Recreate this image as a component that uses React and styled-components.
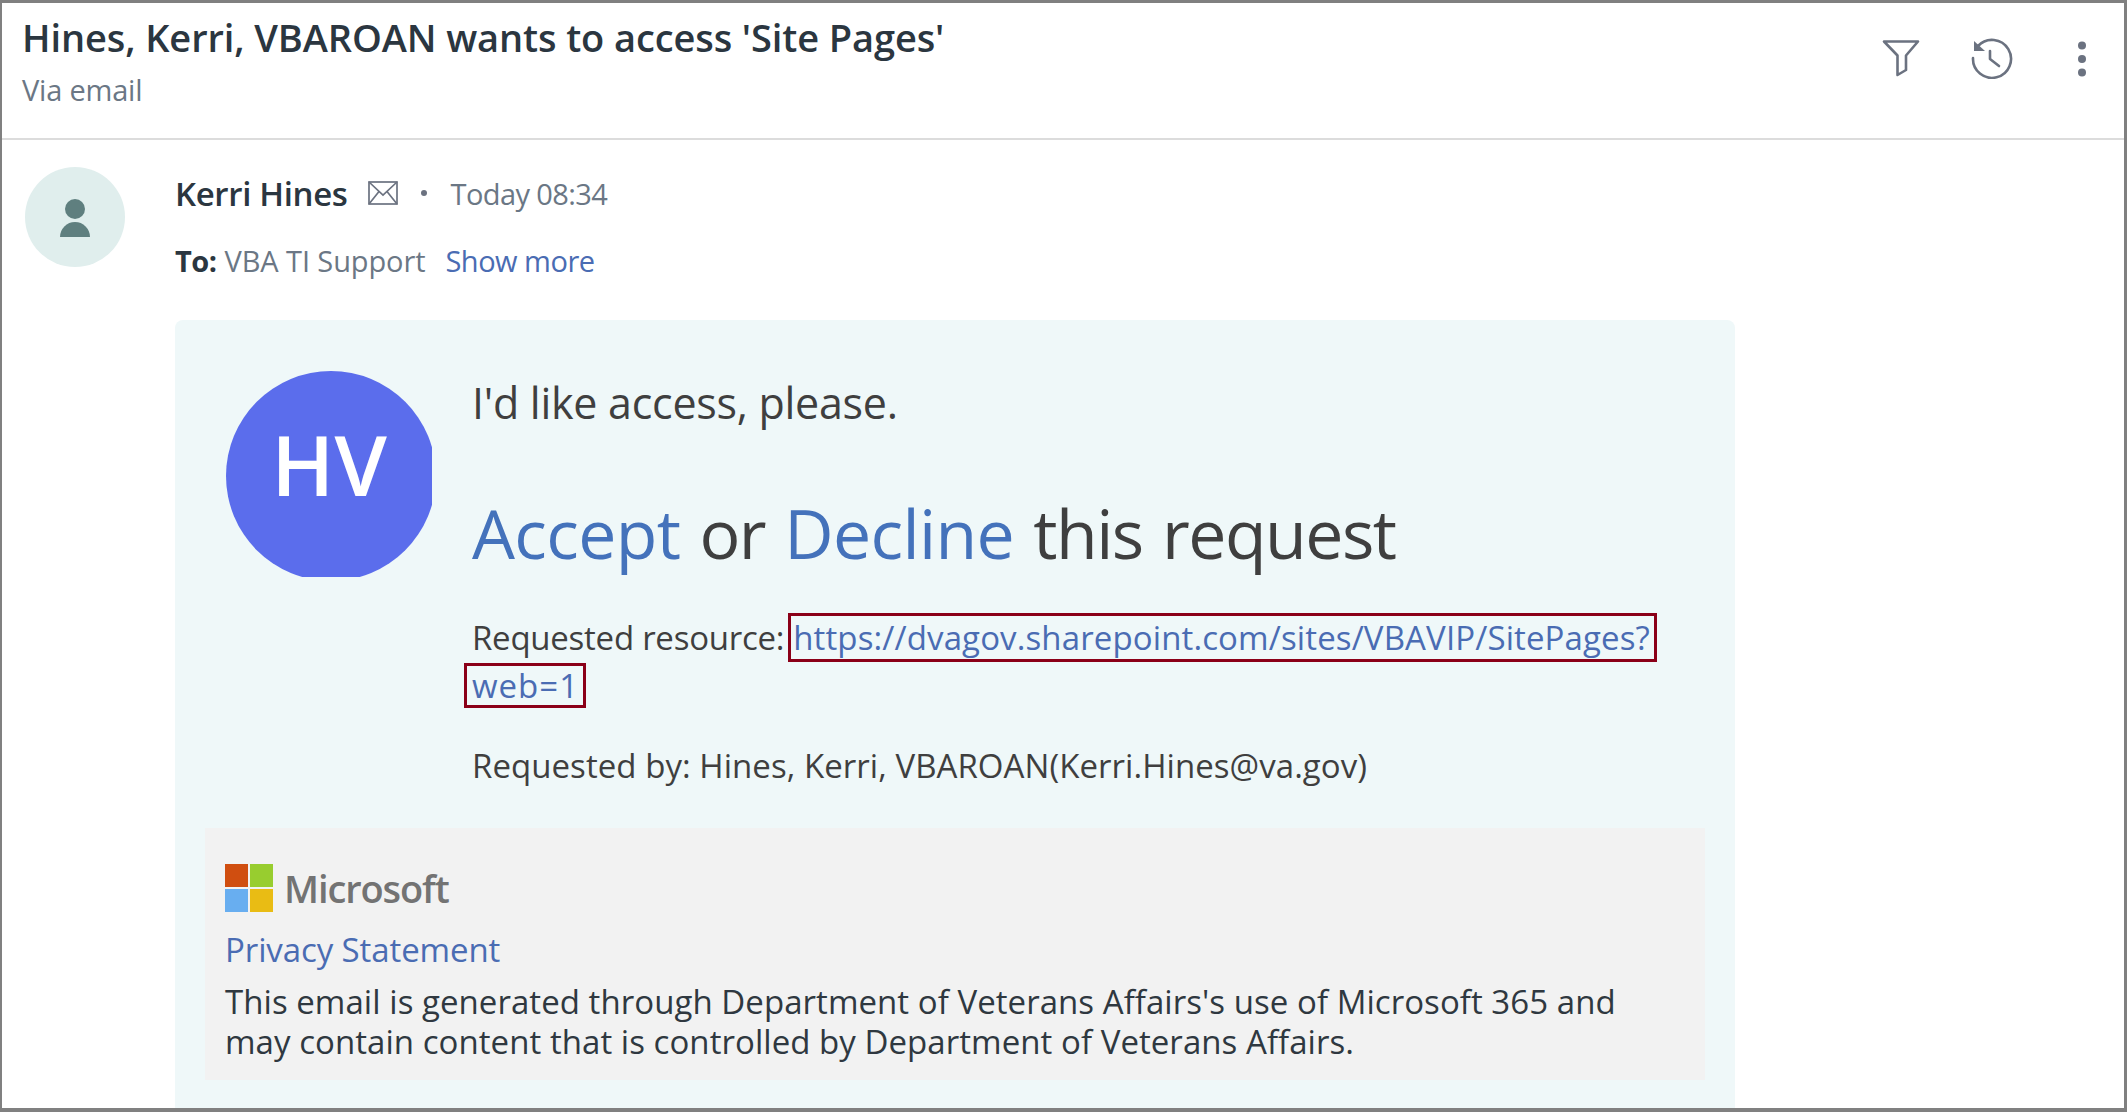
import React from 'react'
import styled, { createGlobalStyle } from 'styled-components'

const Global = createGlobalStyle`
  html, body { margin: 0; padding: 0; background: #fff; }
  body { font-family: "Open Sans", "Noto Sans", "Liberation Sans", sans-serif; }
`

const Frame = styled.div`
  box-sizing: border-box;
  width: 2127px;
  height: 1112px;
  overflow: hidden;
  background: #fff;
  border-style: solid;
  border-color: #808080;
  border-width: 3px 3px 4px 2px;
`

const Header = styled.header`
  box-sizing: border-box;
  height: 137px;
  display: flex;
  justify-content: space-between;
  padding: 11px 0 0 20px;
  border-bottom: 2px solid #dcdcdc;
`

const Title = styled.h1`
  margin: 0;
  font-size: 38px;
  line-height: 46px;
  font-weight: 600;
  letter-spacing: -0.1px;
  color: #2b3640;
`

const Via = styled.div`
  margin-top: 11px;
  font-size: 29px;
  line-height: 38px;
  letter-spacing: -0.2px;
  color: #6b7785;
`

const Tools = styled.div`
  display: flex;
  align-items: flex-start;
  padding: 13px 37px 0 0;
`

const ToolIcon = styled.svg`
  display: block;
  margin-left: ${p => p.$gap}px;
  margin-top: ${p => p.$top}px;
  color: #6b7280;
`

const Message = styled.div`
  display: flex;
  gap: 50px;
  padding: 27px 0 0 23px;
`

const Avatar = styled.div`
  flex: none;
  width: 100px;
  height: 100px;
  border-radius: 50%;
  background: #e0eeed;
`

const Content = styled.div`
  flex: none;
  width: 1560px;
`

const SenderRow = styled.div`
  display: flex;
  align-items: center;
  height: 46px;
  margin-top: 3px;
`

const Sender = styled.span`
  font-size: 33px;
  font-weight: 600;
  letter-spacing: -0.35px;
  color: #2b3640;
`

const MailIcon = styled.svg`
  display: block;
  margin-left: 20px;
  color: #6b7280;
`

const Dot = styled.span`
  width: 6px;
  height: 6px;
  margin: 0 24px 0 23px;
  border-radius: 50%;
  background: #6b7280;
`

const Stamp = styled.span`
  font-size: 29px;
  letter-spacing: -0.6px;
  color: #6b7785;
`

const ToRow = styled.div`
  display: flex;
  align-items: baseline;
  margin-top: 23px;
  font-size: 29px;
  line-height: 44px;
  letter-spacing: -0.1px;
  color: #6b7785;
`

const ToLabel = styled.strong`
  margin-right: 8px;
  font-weight: 700;
  letter-spacing: -0.5px;
  color: #2b3640;
`

const ShowMore = styled.a`
  margin-left: 20px;
  letter-spacing: -0.5px;
  color: #4a6cb3;
`

const Card = styled.section`
  box-sizing: border-box;
  height: 800px;
  margin-top: 37px;
  padding: 51px 30px 0;
  border-radius: 8px 8px 0 0;
  background: #eff8f9;
`

const Request = styled.div`
  display: flex;
  padding-left: 21px;
`

const BadgeClip = styled.div`
  flex: none;
  width: 206px;
  height: 206px;
  overflow: hidden;
`

const Badge = styled.div`
  box-sizing: border-box;
  width: 210px;
  height: 210px;
  padding: 0 4px 25px 0;
  display: flex;
  align-items: center;
  justify-content: center;
  border-radius: 50%;
  background: #5b6dec;
  color: #fff;
  font-size: 84px;
  font-weight: 600;
`

const RequestBody = styled.div`
  margin-left: 40px;
  width: 1220px;
  color: #3f3f3f;
`

const Lead = styled.p`
  margin: 2px 0 0;
  font-size: 43px;
  line-height: 60px;
  letter-spacing: -0.27px;
`

const Action = styled.p`
  margin: 55px 0 0;
  font-size: 68px;
  line-height: 90px;
  letter-spacing: -1.5px;
  word-spacing: 3px;
`

const ActionLink = styled.a`
  letter-spacing: -0.65px;
  color: #4472bb;
`

const Detail = styled.p`
  margin: ${p => p.$top}px 0 0;
  font-size: 33px;
  line-height: 48px;
  letter-spacing: 0.05px;
`

const ResourceLabel = styled.span`
  letter-spacing: -0.25px;
`

const UrlLink = styled.a`
  display: inline-block;
  margin-left: ${p => p.$shift}px;
  padding: 0 4px 0 ${p => p.$inset}px;
  line-height: ${p => p.$line}px;
  letter-spacing: ${p => p.$track}px;
  color: #4a6cb3;
  border: 3px solid #8b0018;
`

const Footer = styled.footer`
  box-sizing: border-box;
  height: 252px;
  margin-top: 38px;
  padding: 36px 20px 0;
  background: #f2f2f2;
  color: #2f3840;
`

const Brand = styled.div`
  display: flex;
  align-items: center;
  gap: 11px;
  height: 48px;
`

const BrandName = styled.span`
  font-size: 38px;
  font-weight: 600;
  letter-spacing: -1.1px;
  color: #737373;
`

const Privacy = styled.a`
  display: block;
  margin-top: 16px;
  font-size: 33px;
  line-height: 44px;
  letter-spacing: -0.1px;
  color: #4a6cb3;
`

const Notice = styled.p`
  margin: 10px 0 0;
  font-size: 33px;
  line-height: 40px;
  letter-spacing: 0.05px;
`

const FilterIcon = () => (
  <ToolIcon $gap={0} $top={12} width="38" height="38" viewBox="0 0 38 38" fill="none" stroke="currentColor" strokeWidth="2.6" strokeLinejoin="round">
    <path d="M2 2.5H36L24 16.5V31L15.5 36V16.5Z" />
  </ToolIcon>
)

const HistoryIcon = () => (
  <ToolIcon $gap={51} $top={10} width="42" height="42" viewBox="0 0 42 42" fill="none" stroke="currentColor" strokeWidth="2.6" strokeLinecap="round" strokeLinejoin="round">
    <path d="M7 9A19 19 0 1 1 2 21" />
    <path d="M3 4V14H14Z" fill="currentColor" stroke="none" />
    <path d="M19 14V22L28 29" />
  </ToolIcon>
)

const MoreIcon = () => (
  <ToolIcon $gap={64} $top={14} width="10" height="36" viewBox="0 0 10 36" fill="currentColor">
    <circle cx="5" cy="4.5" r="4" />
    <circle cx="5" cy="18" r="4" />
    <circle cx="5" cy="31.5" r="4" />
  </ToolIcon>
)

const PersonIcon = () => (
  <svg width="100" height="100" viewBox="0 0 100 100" fill="#5f7f7f">
    <ellipse cx="50" cy="42" rx="10" ry="10" />
    <path d="M35 70a15 15 0 0 1 30 0z" />
  </svg>
)

const MsLogo = () => (
  <svg width="48" height="48" viewBox="0 0 48 48">
    <rect width="23" height="23" fill="#d04e10" />
    <rect x="25" width="23" height="23" fill="#98cd2f" />
    <rect y="25" width="23" height="23" fill="#68aef0" />
    <rect x="25" y="25" width="23" height="23" fill="#e9bc14" />
  </svg>
)

export default function App() {
  return (
    <Frame>
      <Global />
      <Header>
        <div>
          <Title>Hines, Kerri, VBAROAN wants to access 'Site Pages'</Title>
          <Via>Via email</Via>
        </div>
        <Tools>
          <FilterIcon />
          <HistoryIcon />
          <MoreIcon />
        </Tools>
      </Header>
      <Message>
        <Avatar><PersonIcon /></Avatar>
        <Content>
          <SenderRow>
            <Sender>Kerri Hines</Sender>
            <MailIcon width="30" height="24" viewBox="0 0 30 24" fill="none" stroke="currentColor" strokeWidth="1.7">
              <rect x="1" y="1" width="28" height="22" />
              <path d="M1 1L15 14L29 1M1 23L11 10.5M29 23L19 10.5" />
            </MailIcon>
            <Dot />
            <Stamp>Today 08:34</Stamp>
          </SenderRow>
          <ToRow>
            <ToLabel>To:</ToLabel>
            <span>VBA TI Support</span>
            <ShowMore>Show more</ShowMore>
          </ToRow>
          <Card>
            <Request>
              <BadgeClip><Badge>HV</Badge></BadgeClip>
              <RequestBody>
                <Lead>I'd like access, please.</Lead>
                <Action>
                  <ActionLink>Accept</ActionLink> or <ActionLink>Decline</ActionLink> this request
                </Action>
                <Detail $top={35}>
                  <ResourceLabel>Requested resource:</ResourceLabel>
                  <UrlLink $shift={4} $inset={2} $track={0.12} $line={43}>https://dvagov.sharepoint.com/sites/VBAVIP/SitePages?</UrlLink><br />
                  <UrlLink $shift={-8} $inset={5} $track={1} $line={39}>web=1</UrlLink>
                </Detail>
                <Detail $top={32}>Requested by: Hines, Kerri, VBAROAN(Kerri.Hines@va.gov)</Detail>
              </RequestBody>
            </Request>
            <Footer>
              <Brand>
                <MsLogo />
                <BrandName>Microsoft</BrandName>
              </Brand>
              <Privacy>Privacy Statement</Privacy>
              <Notice>
                This email is generated through Department of Veterans Affairs's use of Microsoft 365 and<br />
                may contain content that is controlled by Department of Veterans Affairs.
              </Notice>
            </Footer>
          </Card>
        </Content>
      </Message>
    </Frame>
  )
}
